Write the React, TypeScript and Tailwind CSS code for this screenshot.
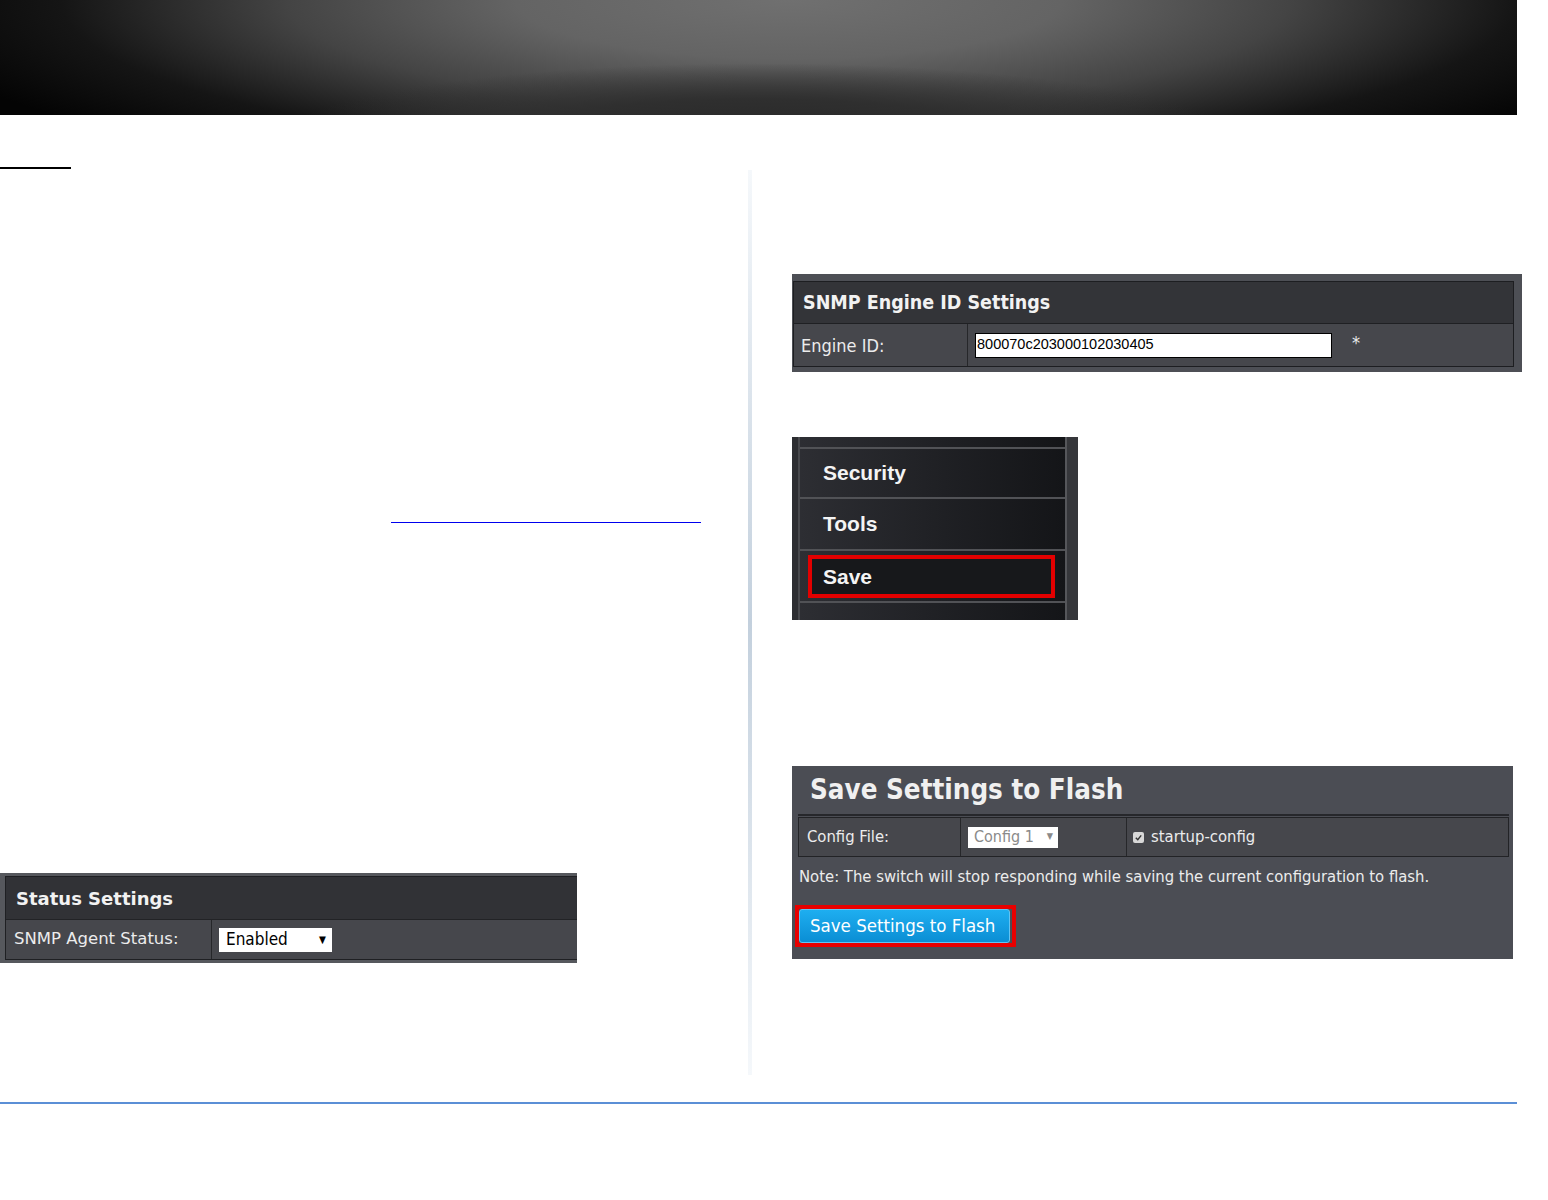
import React from "react";

const cond = "font-['DejaVu_Sans_Condensed','DejaVu_Sans',sans-serif]";
const verdana = "font-['DejaVu_Sans','Verdana',sans-serif]";
const arial = "font-['Liberation_Sans','Arial',sans-serif]";

function StatusSettings() {
    return (
        <div className="w-[577px] bg-[#56585d] pt-[3px] pb-[3px] pl-[5px]">
            <div className="border border-r-0 border-[#1f2023]">
                <div className={`h-[42px] bg-[#313236] flex items-center pl-[10px] text-[18px] font-bold text-[#f2f2f2] ${verdana}`}>
                    Status Settings
                </div>
                <div className="h-[40px] flex bg-[#46474c] border-t border-[#222326]">
                    <div className={`w-[206px] border-r border-[#26272a] flex items-center pl-[8px] text-[16.5px] text-[#ececec] ${verdana}`}>
                        SNMP Agent Status:
                    </div>
                    <div className="flex-1 flex items-center pl-[7px]">
                        <div className={`w-[113px] h-[24px] bg-white flex items-center justify-between pl-[7px] pr-[6px] text-[17px] text-black ${cond}`}>
                            <span>Enabled</span>
                            <span className="text-[10px]">▼</span>
                        </div>
                    </div>
                </div>
            </div>
        </div>
    );
}

function EngineSettings() {
    return (
        <div className="w-[730px] bg-[#4d4f55] pt-[7px] pb-[5px] pl-px pr-[8px]">
            <div className="border border-[#1d1e21]">
                <div className={`h-[41px] bg-[#333438] flex items-center pl-[9px] text-[19.5px] font-bold text-[#f2f2f2] ${cond}`}>
                    SNMP Engine ID Settings
                </div>
                <div className="h-[43px] flex bg-[#46474c] border-t border-[#1f2023]">
                    <div className={`w-[174px] border-r border-[#26272a] flex items-center pl-[7px] text-[18px] text-[#ececec] ${cond}`}>
                        Engine ID:
                    </div>
                    <div className="flex-1 flex items-center pl-[7px]">
                        <div className="w-[357px] h-[25px] bg-white border border-black flex items-center pl-px text-[14.5px] text-black font-['Liberation_Sans_Narrow','Liberation_Sans',sans-serif]">
                            800070c203000102030405
                        </div>
                        <span className={`ml-[20px] -mt-[6px] text-[18px] text-[#eaeaea] ${cond}`}>*</span>
                    </div>
                </div>
            </div>
        </div>
    );
}

function Menu() {
    const sep = "h-[2px] bg-[#515256]";
    return (
        <div className="w-[286px] h-[183px] flex bg-[#1a1b1e]">
            <div className="w-[6px] bg-[#2c2d31]" />
            <div className="w-[2px] bg-[#47484c]" />
            <div className={`flex-1 flex flex-col bg-gradient-to-r from-[#2d2e33] to-[#141518] ${arial}`}>
                <div className="h-[10px]" />
                <div className={sep} />
                <div className="h-[48px] flex items-center pl-[23px] text-[21px] font-bold text-[#f4f4f4]">Security</div>
                <div className={sep} />
                <div className="h-[50px] flex items-center pl-[23px] text-[21px] font-bold text-[#f4f4f4]">Tools</div>
                <div className={sep} />
                <div className="h-[50px] pt-[4px] pl-[8px] pr-[10px]">
                    <div className="h-[43px] border-[4px] border-[#e30000] flex items-center pl-[11px] text-[21px] font-bold text-[#f4f4f4] bg-[#17181b]">
                        Save
                    </div>
                </div>
                <div className={sep} />
                <div className="flex-1" />
            </div>
            <div className="w-[2px] bg-[#55565a]" />
            <div className="w-[11px] bg-[#36373b]" />
        </div>
    );
}

function SaveFlash() {
    return (
        <div className={`w-[721px] bg-[#4b4d54] pl-[6px] pr-[4px] pb-[12px] ${cond}`}>
            <div className="h-[50px] flex items-center pl-[12px] text-[27.5px] font-bold text-[#f0f0f0] border-b-2 border-[#26272b]">
                Save Settings to Flash
            </div>
            <div className="mt-px h-[40px] flex border border-[#222326] bg-[#46474c] text-[16.5px] text-[#ececec]">
                <div className="w-[162px] border-r border-[#26272a] flex items-center pl-[8px]">Config File:</div>
                <div className="w-[166px] border-r border-[#26272a] flex items-center pl-[7px]">
                    <div className="w-[90px] h-[21px] bg-white flex items-center justify-between pl-[6px] pr-[5px] text-[16px] text-[#8a8a8a]">
                        <span>Config 1</span>
                        <span className="text-[9px]">▼</span>
                    </div>
                </div>
                <div className="flex-1 flex items-center pl-[6px]">
                    <div className="w-[11px] h-[11px] bg-[#d8d8d8] rounded-[2px] flex items-center justify-center">
                        <svg width="9" height="9" viewBox="0 0 10 10">
                            <path d="M2 5.2 L4.2 7.4 L8 2.6" stroke="#333" strokeWidth="1.6" fill="none" />
                        </svg>
                    </div>
                    <span className="ml-[7px]">startup-config</span>
                </div>
            </div>
            <div className="mt-[10px] h-[20px] leading-[20px] pl-px text-[16.5px] text-[#ececec] whitespace-nowrap">
                Note: The switch will stop responding while saving the current configuration to flash.
            </div>
            <div className="mt-[18px] -ml-[3px] w-[221px] h-[42px] border-[4px] border-[#e80000] pr-[2px]">
                <div className="h-full rounded-[3px] border border-[#63c3f2] bg-gradient-to-b from-[#1eaef0] to-[#0a8ed4] flex items-center pl-[10px] text-[18.5px] text-white">
                    Save Settings to Flash
                </div>
            </div>
        </div>
    );
}

export default function App() {
    return (
        <div className="w-[1548px] h-[1200px] bg-white overflow-hidden">
            <div className="w-[1517px] h-[115px] bg-[radial-gradient(ellipse_32%_70%_at_50%_125%,#262626_0%,#2f2f2f_55%,transparent_100%),radial-gradient(ellipse_60%_170%_at_52%_0%,#707070_0%,#646464_30%,#444_55%,#151515_80%,#040404_100%)]" />
            <div className="h-[987px] flex">
                <div className="w-[748px] flex flex-col">
                    <div className="mt-[52px] h-[2px] w-[71px] bg-black" />
                    <div className="mt-[353px] ml-[391px] w-[310px] h-px bg-[#0000ee]" />
                    <div className="mt-[350px]">
                        <StatusSettings />
                    </div>
                </div>
                <div className="w-[4px] mt-[55px] h-[905px] bg-gradient-to-b from-[#f5f8fb] via-[#c3d0dd] to-[#f5f8fb]" />
                <div className="ml-[40px] flex flex-col">
                    <div className="mt-[159px]">
                        <EngineSettings />
                    </div>
                    <div className="mt-[65px]">
                        <Menu />
                    </div>
                    <div className="mt-[146px]">
                        <SaveFlash />
                    </div>
                </div>
            </div>
            <div className="w-[1517px] h-[2px] bg-[#5b8fd6]" />
        </div>
    );
}
